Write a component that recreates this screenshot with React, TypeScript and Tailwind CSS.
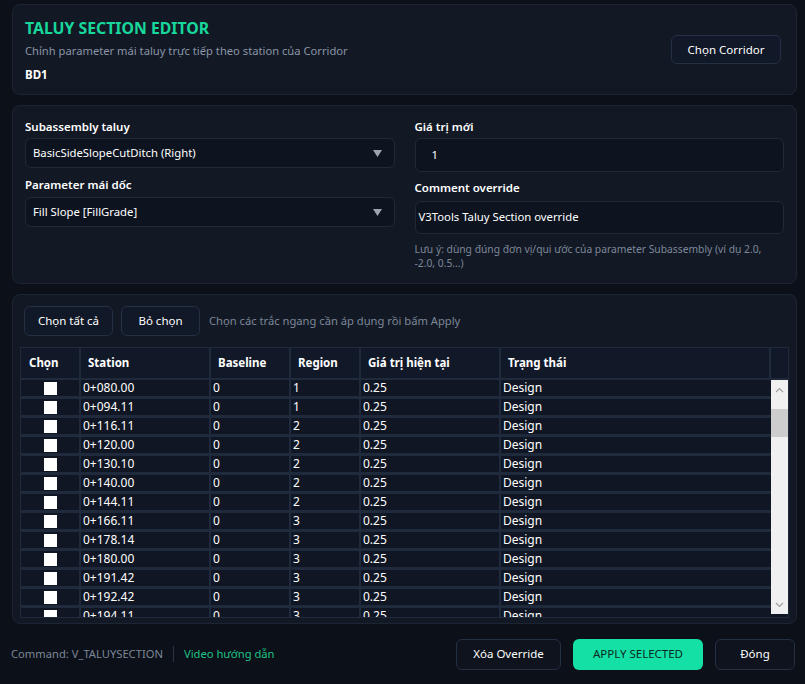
import React from "react";

const rows = [
  ["0+080.00", "0", "1"],
  ["0+094.11", "0", "1"],
  ["0+116.11", "0", "2"],
  ["0+120.00", "0", "2"],
  ["0+130.10", "0", "2"],
  ["0+140.00", "0", "2"],
  ["0+144.11", "0", "2"],
  ["0+166.11", "0", "3"],
  ["0+178.14", "0", "3"],
  ["0+180.00", "0", "3"],
  ["0+191.42", "0", "3"],
  ["0+192.42", "0", "3"],
  ["0+194.11", "0", "3"],
];

const Caret = () => (
  <svg width="9" height="7" viewBox="0 0 9 7" className="shrink-0">
    <path d="M0 0 L9 0 L4.5 7 Z" fill="#9ca3af" />
  </svg>
);

const App: React.FC = () => {
  return (
    <div
      className="w-[805px] h-[684px] bg-[#0b1019] text-white flex flex-col pl-3 pr-2 pt-1 overflow-hidden"
      style={{ fontFamily: '"Noto Sans", "Open Sans", sans-serif' }}
    >
      {/* Header */}
      <div className="h-[91px] shrink-0 rounded-lg border border-[#1c2533] bg-[#121925] flex items-center justify-between pl-3 pr-[15px]">
        <div className="flex flex-col">
          <h1 className="text-[15.8px] font-bold text-[#17d79b] leading-5 mt-[1px]">TALUY SECTION EDITOR</h1>
          <p className="text-[11.2px] text-[#8a94a6] mt-[5px] leading-4">
            Chỉnh parameter mái taluy trực tiếp theo station của Corridor
          </p>
          <p className="text-[11.5px] font-bold text-white mt-[8px] leading-4">BD1</p>
        </div>
        <button className="h-[29px] w-[110px] rounded-md border border-[#243044] bg-[#111827] text-[11.5px] text-white">
          Chọn Corridor
        </button>
      </div>

      {/* Params */}
      <div className="mt-[10px] h-[179px] shrink-0 rounded-lg border border-[#1c2533] bg-[#121925] grid grid-cols-2 gap-x-5 pl-3 pr-3 pt-[13px]">
        <div className="flex flex-col">
          <label className="text-[11.5px] font-semibold leading-4">Subassembly taluy</label>
          <div className="mt-[3px] h-[30px] rounded-md border border-[#1f2937] bg-[#0e141f] flex items-center justify-between pl-[7px] pr-3">
            <span className="text-[11.3px]">BasicSideSlopeCutDitch (Right)</span>
            <Caret />
          </div>
          <label className="text-[11.5px] font-semibold leading-4 mt-[9px]">Parameter mái dốc</label>
          <div className="mt-[4px] h-[30px] rounded-md border border-[#1f2937] bg-[#0e141f] flex items-center justify-between pl-[7px] pr-3">
            <span className="text-[11.3px]">Fill Slope [FillGrade]</span>
            <Caret />
          </div>
        </div>
        <div className="flex flex-col">
          <label className="text-[11.5px] font-semibold leading-4">Giá trị mới</label>
          <div className="mt-[3px] h-[34px] rounded-md border border-[#1f2937] bg-[#0e141f] flex items-center pl-[16px]">
            <span className="text-[11.3px]">1</span>
          </div>
          <label className="text-[11.5px] font-semibold leading-4 mt-[8px]">Comment override</label>
          <div className="mt-[5px] h-[33px] rounded-md border border-[#1f2937] bg-[#0e141f] flex items-center pl-[3px]">
            <span className="text-[11.3px]">V3Tools Taluy Section override</span>
          </div>
          <p className="text-[10.3px] text-[#7d8798] leading-[14px] mt-[8px]">
            Lưu ý: dùng đúng đơn vị/qui ước của parameter Subassembly (ví dụ 2.0, -2.0, 0.5...)
          </p>
        </div>
      </div>

      {/* Table card */}
      <div className="mt-[10px] h-[330px] shrink-0 rounded-lg border border-[#1c2533] bg-[#121925] flex flex-col pt-[11px] pb-[5px] px-[7px]">
        <div className="flex items-center gap-2 pl-[4px]">
          <button className="h-[30px] w-[89px] rounded-md border border-[#243044] bg-[#111827] text-[11.5px]">
            Chọn tất cả
          </button>
          <button className="h-[30px] w-[79px] rounded-md border border-[#243044] bg-[#111827] text-[11.5px]">
            Bỏ chọn
          </button>
          <span className="text-[11.2px] text-[#7d8798] ml-[1px]">Chọn các trắc ngang cần áp dụng rồi bấm Apply</span>
        </div>

        <div className="mt-[11px] flex-1 border border-[#1f2a3c] bg-[#0f1521] flex flex-col overflow-hidden">
          <div className="h-[32px] shrink-0 flex border-b-2 border-[#1f2a3c] bg-[#111827] text-[11.5px] font-bold">
            <div className="w-[60px] border-r-2 border-[#1f2a3c] flex items-center pl-[8px]">Chọn</div>
            <div className="w-[130px] border-r-2 border-[#1f2a3c] flex items-center pl-[7px]">Station</div>
            <div className="w-[80px] border-r-2 border-[#1f2a3c] flex items-center pl-[7px]">Baseline</div>
            <div className="w-[70px] border-r-2 border-[#1f2a3c] flex items-center pl-[7px]">Region</div>
            <div className="w-[140px] border-r-2 border-[#1f2a3c] flex items-center pl-[7px]">Giá trị hiện tại</div>
            <div className="w-[270px] border-r-2 border-[#1f2a3c] flex items-center pl-[7px]">Trạng thái</div>
            <div className="flex-1" />
          </div>
          <div className="flex-1 flex overflow-hidden">
            <div className="flex flex-col w-[750px] overflow-hidden">
              {rows.map(([st, bl, rg]) => (
                <div key={st} className="h-[19px] shrink-0 flex border-b-[3px] border-[#1f2a3c] bg-[#101623] text-[12px] leading-4">
                  <div className="w-[60px] border-r-2 border-[#1f2a3c] flex items-center justify-center">
                    <div className="w-[13px] h-[13px] bg-white" />
                  </div>
                  <div className="w-[130px] border-r-2 border-[#1f2a3c] flex items-center pl-[2px]">{st}</div>
                  <div className="w-[80px] border-r-2 border-[#1f2a3c] flex items-center pl-[2px]">{bl}</div>
                  <div className="w-[70px] border-r-2 border-[#1f2a3c] flex items-center pl-[2px]">{rg}</div>
                  <div className="w-[140px] border-r-2 border-[#1f2a3c] flex items-center pl-[2px]">0.25</div>
                  <div className="w-[270px] flex items-center pl-[2px]">Design</div>
                </div>
              ))}
            </div>
            {/* scrollbar */}
            <div className="w-[17px] h-[234px] bg-[#f0f0f0] flex flex-col items-center shrink-0">
              <svg width="9" height="6" viewBox="0 0 9 6" className="mt-[7px]">
                <path d="M1 5 L4.5 1.5 L8 5" stroke="#a0a0a0" strokeWidth="1.2" fill="none" />
              </svg>
              <div className="mt-[16px] w-[17px] h-[28px] bg-[#cdcdcd]" />
              <div className="flex-1" />
              <svg width="9" height="6" viewBox="0 0 9 6" className="mb-[6px]">
                <path d="M1 1 L4.5 4.5 L8 1" stroke="#a0a0a0" strokeWidth="1.2" fill="none" />
              </svg>
            </div>
          </div>
        </div>
      </div>

      {/* Footer */}
      <div className="flex-1 flex items-center justify-between pl-0 pr-[2px]">
        <div className="flex items-center text-[11.2px] -ml-[1px]">
          <span className="text-[#7d8798]">Command: V_TALUYSECTION</span>
          <span className="mx-[10px] w-px h-[16px] bg-[#2a3444]" />
          <span className="text-[#1fc387]">Video hướng dẫn</span>
        </div>
        <div className="flex items-center gap-3">
          <button className="h-[31px] w-[105px] rounded-md border border-[#243044] bg-[#0e131d] text-[11.5px]">
            Xóa Override
          </button>
          <button className="h-[31px] w-[130px] rounded-md bg-[#14dfa5] text-[11.5px] text-[#0b2a22]">
            APPLY SELECTED
          </button>
          <button className="h-[31px] w-[80px] rounded-md border border-[#243044] bg-[#0e131d] text-[11.5px]">
            Đóng
          </button>
        </div>
      </div>
    </div>
  );
};

export default App;
